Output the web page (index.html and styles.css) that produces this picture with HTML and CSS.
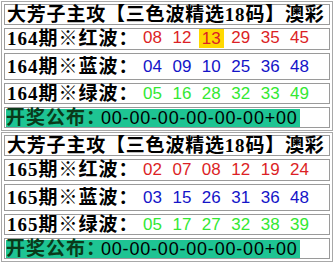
FILE: index.html
```html
<!DOCTYPE html>
<html lang="zh">
<head>
<meta charset="utf-8">
<link rel="stylesheet" href="styles.css">
</head>
<body>
<div class="page">
  <div class="block">
    <div class="row title">大芳子主攻【三色波精选18码】澳彩</div>
    <div class="row r1"><span class="label">164期※红波：</span><span class="nums red"><span>08</span><span>12</span><span class="hl">13</span><span>29</span><span>35</span><span>45</span></span></div>
    <div class="row r2"><span class="label">164期※蓝波：</span><span class="nums blue"><span>04</span><span>09</span><span>10</span><span>25</span><span>36</span><span>48</span></span></div>
    <div class="row r3"><span class="label">164期※绿波：</span><span class="nums green"><span>05</span><span>16</span><span>28</span><span>32</span><span>33</span><span>49</span></span></div>
    <div class="row kj"><span class="kjbox"><span class="kjlabel">开奖公布：</span><span class="kjnum">00-00-00-00-00-00+00</span></span></div>
  </div>
  <div class="block">
    <div class="row title">大芳子主攻【三色波精选18码】澳彩</div>
    <div class="row r1"><span class="label">165期※红波：</span><span class="nums red"><span>02</span><span>07</span><span>08</span><span>12</span><span>19</span><span>24</span></span></div>
    <div class="row r2"><span class="label">165期※蓝波：</span><span class="nums blue"><span>03</span><span>15</span><span>26</span><span>31</span><span>36</span><span>48</span></span></div>
    <div class="row r3"><span class="label">165期※绿波：</span><span class="nums green"><span>05</span><span>17</span><span>27</span><span>32</span><span>38</span><span>39</span></span></div>
    <div class="row kj"><span class="kjbox"><span class="kjlabel">开奖公布：</span><span class="kjnum">00-00-00-00-00-00+00</span></span></div>
  </div>
</div>
</body>
</html>
```

FILE: styles.css
```css
html, body {
  margin: 0;
  padding: 0;
  background: #ffffff;
}
.page {
  width: 332px;
  padding: 1px 0 0 1px;
  display: flex;
  flex-direction: column;
}
.block {
  border: 1px solid #a8a8a8;
  padding: 2px;
  display: flex;
  flex-direction: column;
  gap: 3px;
  height: 130px;
  box-sizing: border-box;
  margin-bottom: 1px;
}
.row {
  border: 1px solid #9a9a9a;
  display: flex;
  align-items: center;
  padding-left: 2px;
  box-sizing: border-box;
  font-family: "Liberation Serif", "Noto Sans CJK SC", serif;
  font-weight: bold;
  font-size: 19px;
  line-height: 1;
  color: #000;
  white-space: nowrap;
}
.title { height: 21px; letter-spacing: 0.8px; }
.r1 { height: 23px; }
.r2 { height: 29px; }
.r3 { height: 23px; }
.kj { height: 22px; padding-left: 1px; }
.label {
  width: 136px;
  flex: none;
  letter-spacing: 1px;
}
.nums {
  display: flex;
  gap: 10.5px;
  font-family: "Liberation Sans", sans-serif;
  font-weight: normal;
  font-size: 17px;
  letter-spacing: 0;
}
.nums span { display: inline-block; }
.red { color: #dc1f26; }
.blue { color: #1414c8; }
.green { color: #33e833; }
.hl {
  background: #ffd900;
  padding: 1px 3px;
  margin: 0 -3px;
}
.kjbox {
  background: #1ec493;
  display: flex;
  align-items: center;
  height: 18px;
  padding-right: 2px;
}
.kjlabel {
  color: #0a3a1a;
  width: 95px;
  letter-spacing: 1px;
}
.kjnum {
  font-family: "Liberation Sans", sans-serif;
  font-weight: normal;
  font-size: 18px;
  letter-spacing: 0.8px;
  color: #000;
}
```
